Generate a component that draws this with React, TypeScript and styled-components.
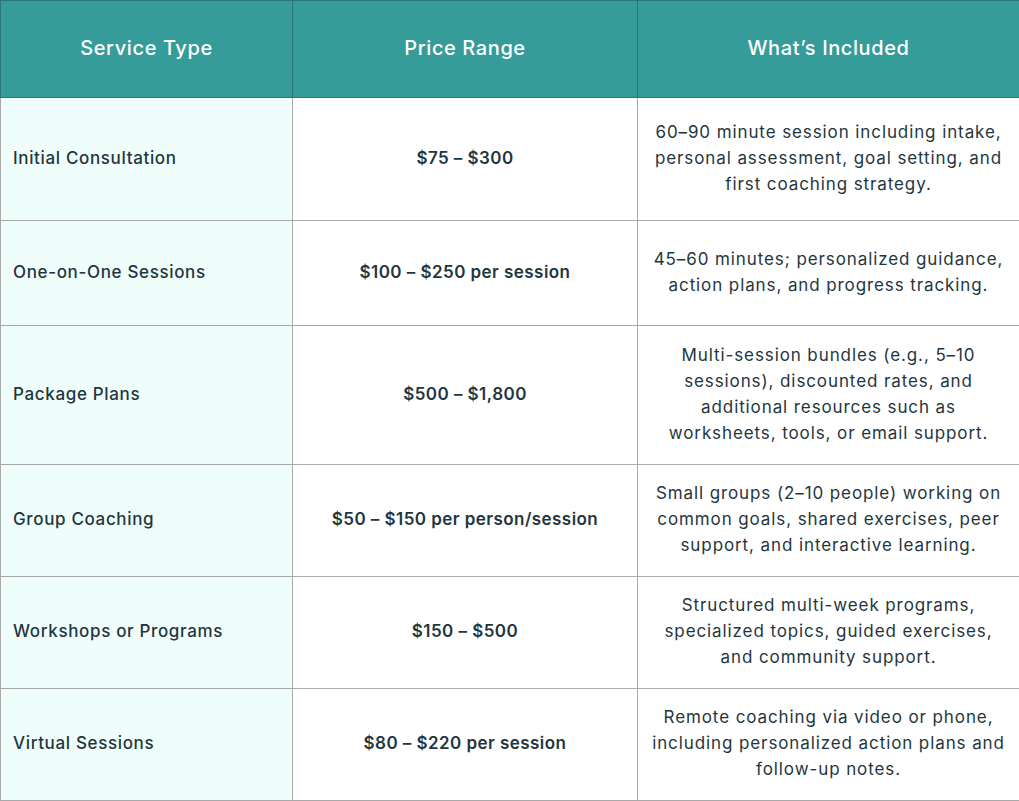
import React from 'react'
import styled, { createGlobalStyle } from 'styled-components'

const GlobalStyle = createGlobalStyle`
  html, body {
    margin: 0;
    padding: 0;
    background: #ffffff;
  }
  body {
    font-family: Inter, "Noto Sans", sans-serif;
    color: #1f3640;
  }
`

interface Service {
  name: string
  price: string
  included: string[]
  height: number
}

const services: Service[] = [
  {
    name: 'Initial Consultation',
    price: '$75 – $300',
    included: [
      '60–90 minute session including intake,',
      'personal assessment, goal setting, and',
      'first coaching strategy.'
    ],
    height: 123
  },
  {
    name: 'One-on-One Sessions',
    price: '$100 – $250 per session',
    included: [
      '45–60 minutes; personalized guidance,',
      'action plans, and progress tracking.'
    ],
    height: 105
  },
  {
    name: 'Package Plans',
    price: '$500 – $1,800',
    included: [
      'Multi-session bundles (e.g., 5–10',
      'sessions), discounted rates, and',
      'additional resources such as',
      'worksheets, tools, or email support.'
    ],
    height: 139
  },
  {
    name: 'Group Coaching',
    price: '$50 – $150 per person/session',
    included: [
      'Small groups (2–10 people) working on',
      'common goals, shared exercises, peer',
      'support, and interactive learning.'
    ],
    height: 112
  },
  {
    name: 'Workshops or Programs',
    price: '$150 – $500',
    included: [
      'Structured multi-week programs,',
      'specialized topics, guided exercises,',
      'and community support.'
    ],
    height: 112
  },
  {
    name: 'Virtual Sessions',
    price: '$80 – $220 per session',
    included: [
      'Remote coaching via video or phone,',
      'including personalized action plans and',
      'follow-up notes.'
    ],
    height: 112
  }
]

const App = (): React.ReactElement => {
  return (
    <>
      <GlobalStyle />
      <Table>
        <colgroup>
          <col style={{ width: 292 }} />
          <col style={{ width: 345 }} />
          <col style={{ width: 382 }} />
        </colgroup>
        <thead>
          <HeadRow>
            <HeadCell>Service Type</HeadCell>
            <HeadCell>Price Range</HeadCell>
            <HeadCell>What’s Included</HeadCell>
          </HeadRow>
        </thead>
        <tbody>
          {services.map((s) => (
            <tr key={s.name} style={{ height: s.height }}>
              <NameCell>{s.name}</NameCell>
              <PriceCell>{s.price}</PriceCell>
              <IncludedCell>
                {s.included.map((line) => (
                  <Line key={line}>{line}</Line>
                ))}
              </IncludedCell>
            </tr>
          ))}
        </tbody>
      </Table>
    </>
  )
}

export default App

const Table = styled.table`
  width: 1019px;
  table-layout: fixed;
  border-collapse: collapse;
  font-size: 17px;
  letter-spacing: 0.45px;
`
const HeadRow = styled.tr`
  height: 97px;
  background: #369c99;
`
const HeadCell = styled.th`
  color: #ffffff;
  font-size: 20px;
  font-weight: 500;
  letter-spacing: 0.6px;
  text-align: center;
  vertical-align: middle;
  border: 1px solid #2b7775;
  padding: 0 12px 2px;
`
const Cell = styled.td`
  border: 1px solid #a9a9a9;
  vertical-align: middle;
  padding: 0 12px 3px;
  line-height: 26px;
  color: #1f3640;
`
const NameCell = styled(Cell)`
  background: #effefb;
  font-weight: 500;
  letter-spacing: 0.65px;
  text-align: left;
`
const PriceCell = styled(Cell)`
  font-weight: 600;
  text-align: center;
`
const IncludedCell = styled(Cell)`
  font-weight: 400;
  letter-spacing: 0.9px;
  text-align: center;
  padding: 0 2px 3px;
`
const Line = styled.span`
  display: block;
  white-space: nowrap;
`
